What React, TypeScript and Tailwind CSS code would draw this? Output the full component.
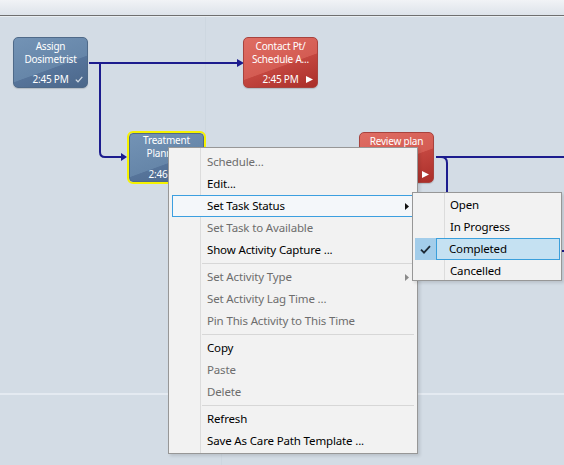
import React from "react";
import clsx from "clsx";

const blueFill =
  "bg-[linear-gradient(160deg,#7393b5_0%,#6686a9_58%,#56749a_59%,#4b678a_100%)] border-[#4f6a89]";
const redFill =
  "bg-[linear-gradient(160deg,#df6d63_0%,#d45c53_55%,#c3463f_56%,#aa2e29_100%)] border-[#a8433e]";

const Check = () => (
  <svg width="8" height="7" viewBox="0 0 8 7" className="absolute right-[4px] bottom-[3px]">
    <path d="M0.8 3.6 L3 5.8 L7.3 0.8" fill="none" stroke="#d2dbe4" strokeWidth="1.3" />
  </svg>
);

const Play = () => (
  <svg width="7" height="7" viewBox="0 0 7 7" className="absolute right-[4px] bottom-[3px]">
    <path d="M0 0 L7 3.5 L0 7 Z" fill="#ffffff" />
  </svg>
);

type NodeProps = {
  pos: string;
  fill: string;
  lines: string[];
  time: string;
  icon?: React.ReactNode;
};

const Node = ({ pos, fill, lines, time, icon }: NodeProps) => (
  <div
    className={clsx(
      "absolute w-[75px] h-[51px] rounded-[5px] border flex flex-col justify-between pt-[2px] pb-[1px] text-white text-[10px] tracking-[-0.2px] leading-[13px] text-center shadow-[0_1px_1px_rgba(0,0,0,0.15)]",
      pos,
      fill
    )}
  >
    <div>
      {lines.map((l) => (
        <div key={l}>{l}</div>
      ))}
    </div>
    <div className="relative">
      {time}
      {icon}
    </div>
  </div>
);

type ItemProps = {
  label: string;
  disabled?: boolean;
  arrow?: boolean;
  active?: boolean;
};

const Item = ({ label, disabled, arrow, active }: ItemProps) => (
  <div
    className={clsx(
      "h-[22px] flex items-center justify-between pl-[35px] pr-[5px]",
      disabled ? "text-[#6d6d6d]" : "text-black",
      active && "bg-[#f4f7fa] shadow-[inset_0_0_0_1px_#3c9fe0]"
    )}
  >
    <span>{label}</span>
    {arrow && (
      <svg width="4" height="7" viewBox="0 0 4 7">
        <path d="M0 0 L4 3.5 L0 7 Z" fill={disabled ? "#8a8a8a" : "#111111"} />
      </svg>
    )}
  </div>
);

const Sep = () => (
  <div className="h-[5px] pt-[2px] pl-[30px]">
    <div className="h-px bg-[#d7d7d7]" />
  </div>
);

const SubItem = ({ label }: { label: string }) => (
  <div className="h-[22px] flex items-center pl-[35px]">{label}</div>
);

export default function App() {
  return (
    <div className="relative w-[564px] h-[465px] overflow-hidden flex flex-col bg-[#d3dce5] font-['Noto_Sans',sans-serif] select-none">
      {/* header strip */}
      <div className="h-[15px] bg-[linear-gradient(to_bottom,#f1f3f6,#dde3ea)]" />
      <div className="h-px bg-[#6f6f6f]" />
      <div className="h-px bg-[#e9eef2]" />

      {/* lanes */}
      <div className="flex-1 flex flex-col">
        <div className="h-[376px] grid grid-cols-[206px_1fr]">
          <div className="border-r border-[#cdd7e0]" />
          <div />
        </div>
        <div className="h-[2px] bg-[#e4eaf1]" />
        <div className="flex-1 grid grid-cols-[222px_1fr]">
          <div className="border-r border-[#cdd7e0]" />
          <div />
        </div>
      </div>

      {/* connectors */}
      <svg
        className="absolute inset-0 pointer-events-none"
        width="564"
        height="465"
        viewBox="0 0 564 465"
      >
        <g fill="none" stroke="#1c1c8e" strokeWidth="2">
          <path d="M89 63 H238" />
          <path d="M100 63 V152 Q100 157 105 157 H122" />
          <path d="M436 157 H564" />
          <path d="M441 157 Q447 157 447 163 V194" />
          <path d="M559 251 H564" />
        </g>
        <g fill="#1c1c8e">
          <path d="M237 59 L244 63 L237 67 Z" />
          <path d="M121 153 L127 157 L121 161 Z" />
        </g>
      </svg>

      {/* activity nodes */}
      <Node
        pos="left-[13px] top-[37px]"
        fill={blueFill}
        lines={["Assign", "Dosimetrist"]}
        time="2:45 PM"
        icon={<Check />}
      />
      <Node
        pos="left-[243px] top-[37px]"
        fill={redFill}
        lines={["Contact Pt/", "Schedule A..."]}
        time="2:45 PM"
        icon={<Play />}
      />
      <div className="absolute left-[127px] top-[131px] w-[79px] h-[53px] rounded-[6px] border-2 border-[#f5f200]">
        <div
          className={clsx(
            "w-full h-full rounded-[4px] border flex flex-col justify-between pt-0 pb-0 text-white text-[10px] tracking-[-0.2px] leading-[13px] text-center",
            blueFill
          )}
        >
          <div>
            <div>Treatment</div>
            <div>Planning</div>
          </div>
          <div>2:46 PM</div>
        </div>
      </div>
      <Node
        pos="left-[359px] top-[132px]"
        fill={redFill}
        lines={["Review plan"]}
        time=""
        icon={<Play />}
      />

      {/* context menu */}
      <div className="absolute left-[168px] top-[147px] w-[250px] border border-[#979797] pt-[3px] pb-[1px] px-[3px] text-[11.5px] tracking-[-0.15px] leading-none bg-[linear-gradient(to_right,#f2f2f2_31px,#dcdcdc_31px,#dcdcdc_32px,#f2f2f2_32px)] shadow-[2px_2px_3px_rgba(0,0,0,0.12)]">
        <Item label="Schedule..." disabled />
        <Item label="Edit..." />
        <Item label="Set Task Status" arrow active />
        <Item label="Set Task to Available" disabled />
        <Item label="Show Activity Capture ..." />
        <Sep />
        <Item label="Set Activity Type" disabled arrow />
        <Item label="Set Activity Lag Time ..." disabled />
        <Item label="Pin This Activity to This Time" disabled />
        <Sep />
        <Item label="Copy" />
        <Item label="Paste" disabled />
        <Item label="Delete" disabled />
        <Sep />
        <Item label="Refresh" />
        <Item label="Save As Care Path Template ..." />
      </div>

      {/* status submenu */}
      <div className="absolute left-[412px] top-[192px] w-[150px] border border-[#979797] pt-[1px] pb-0 pl-[2px] pr-[1px] text-[11.5px] tracking-[-0.15px] leading-none text-black bg-[linear-gradient(to_right,#f2f2f2_31px,#dcdcdc_31px,#dcdcdc_32px,#f2f2f2_32px)] shadow-[2px_2px_3px_rgba(0,0,0,0.12)]">
        <SubItem label="Open" />
        <SubItem label="In Progress" />
        <div className="h-[22px] flex items-stretch bg-[#c5e1f2] shadow-[inset_0_0_0_1px_#3a9fdc]">
          <div className="w-[22px] flex items-center justify-center bg-[#a3cdea] border-r border-[#3a9fdc]">
            <svg width="11" height="9" viewBox="0 0 11 9">
              <path d="M1 4.6 L4 7.6 L10 1.2" fill="none" stroke="#1e2a36" strokeWidth="1.8" />
            </svg>
          </div>
          <div className="flex items-center pl-[12px]">Completed</div>
        </div>
        <div className="h-[20px] flex items-center pl-[35px] pt-[2px]">Cancelled</div>
      </div>
    </div>
  );
}
